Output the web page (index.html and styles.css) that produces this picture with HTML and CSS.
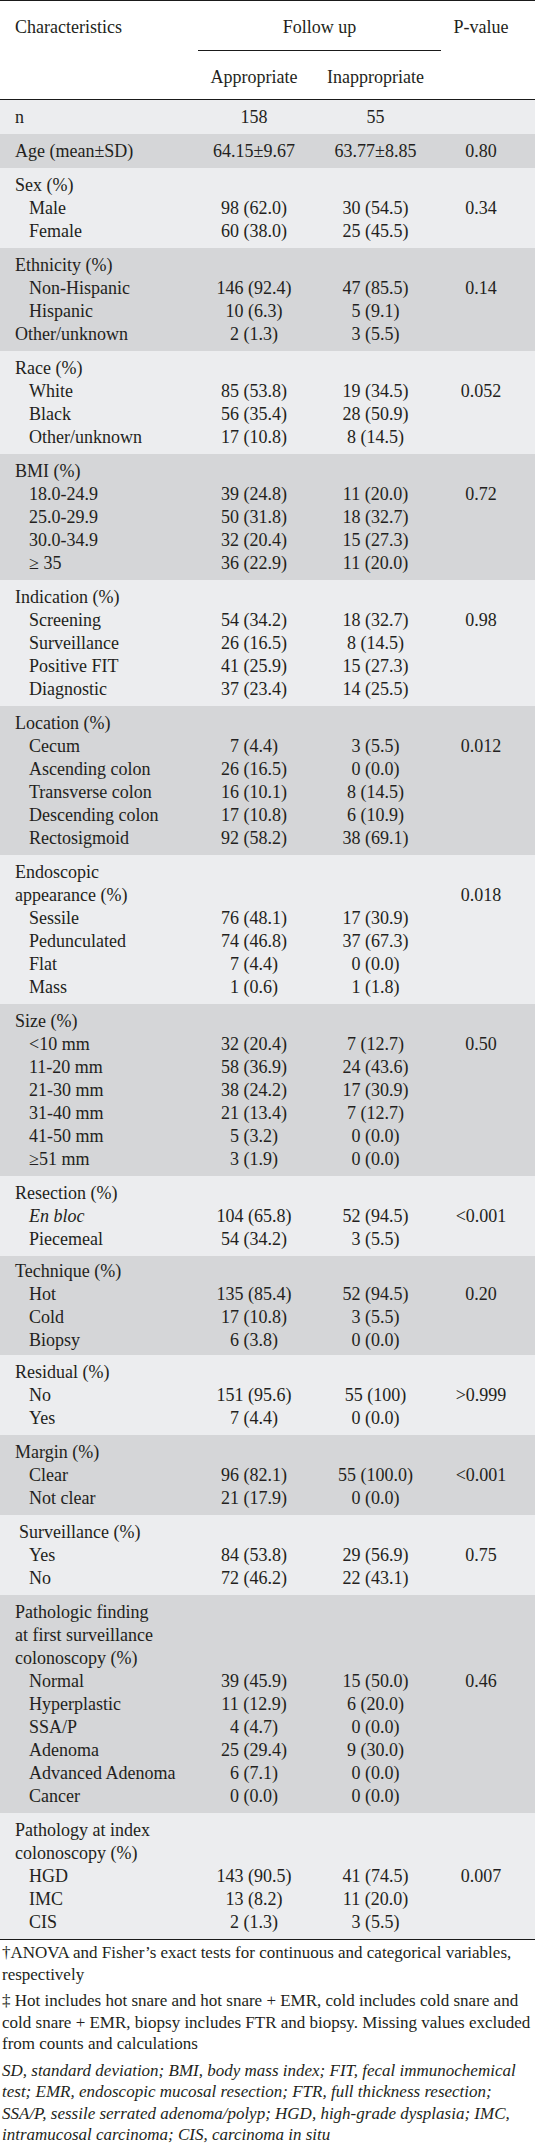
FILE: index.html
```html
<!DOCTYPE html>
<html lang="en">
  <head>
    <meta charset="utf-8">
    <title>Follow up characteristics</title>
    <link rel="stylesheet" href="styles.css">
  </head>
  <body>
    <table class="stats">
      <colgroup>
        <col class="c-lbl">
        <col class="c-app">
        <col class="c-inapp">
        <col class="c-p">
      </colgroup>
      <thead>
        <tr class="head-top">
          <th class="lbl" rowspan="2">Characteristics</th>
          <th class="follow" colspan="2">Follow up</th>
          <th class="pval" rowspan="2">P-value</th>
        </tr>
        <tr class="head-sub">
          <th>Appropriate</th>
          <th>Inappropriate</th>
        </tr>
      </thead>
      <tbody>
        <tr><td class="lbl">n</td><td>158</td><td>55</td><td class="pval"></td></tr>
      </tbody>
      <tbody>
        <tr><td class="lbl">Age (mean±SD)</td><td>64.15±9.67</td><td>63.77±8.85</td><td class="pval">0.80</td></tr>
      </tbody>
      <tbody>
        <tr><td class="lbl">Sex (%)</td><td></td><td></td><td class="pval"></td></tr>
        <tr><td class="sub">Male</td><td>98 (62.0)</td><td>30 (54.5)</td><td class="pval">0.34</td></tr>
        <tr><td class="sub">Female</td><td>60 (38.0)</td><td>25 (45.5)</td><td class="pval"></td></tr>
      </tbody>
      <tbody>
        <tr><td class="lbl">Ethnicity (%)</td><td></td><td></td><td class="pval"></td></tr>
        <tr><td class="sub">Non-Hispanic</td><td>146 (92.4)</td><td>47 (85.5)</td><td class="pval">0.14</td></tr>
        <tr><td class="sub">Hispanic</td><td>10 (6.3)</td><td>5 (9.1)</td><td class="pval"></td></tr>
        <tr><td class="lbl">Other/unknown</td><td>2 (1.3)</td><td>3 (5.5)</td><td class="pval"></td></tr>
      </tbody>
      <tbody>
        <tr><td class="lbl">Race (%)</td><td></td><td></td><td class="pval"></td></tr>
        <tr><td class="sub">White</td><td>85 (53.8)</td><td>19 (34.5)</td><td class="pval">0.052</td></tr>
        <tr><td class="sub">Black</td><td>56 (35.4)</td><td>28 (50.9)</td><td class="pval"></td></tr>
        <tr><td class="sub">Other/unknown</td><td>17 (10.8)</td><td>8 (14.5)</td><td class="pval"></td></tr>
      </tbody>
      <tbody>
        <tr><td class="lbl">BMI (%)</td><td></td><td></td><td class="pval"></td></tr>
        <tr><td class="sub">18.0-24.9</td><td>39 (24.8)</td><td>11 (20.0)</td><td class="pval">0.72</td></tr>
        <tr><td class="sub">25.0-29.9</td><td>50 (31.8)</td><td>18 (32.7)</td><td class="pval"></td></tr>
        <tr><td class="sub">30.0-34.9</td><td>32 (20.4)</td><td>15 (27.3)</td><td class="pval"></td></tr>
        <tr><td class="sub">≥ 35</td><td>36 (22.9)</td><td>11 (20.0)</td><td class="pval"></td></tr>
      </tbody>
      <tbody>
        <tr><td class="lbl">Indication (%)</td><td></td><td></td><td class="pval"></td></tr>
        <tr><td class="sub">Screening</td><td>54 (34.2)</td><td>18 (32.7)</td><td class="pval">0.98</td></tr>
        <tr><td class="sub">Surveillance</td><td>26 (16.5)</td><td>8 (14.5)</td><td class="pval"></td></tr>
        <tr><td class="sub">Positive FIT</td><td>41 (25.9)</td><td>15 (27.3)</td><td class="pval"></td></tr>
        <tr><td class="sub">Diagnostic</td><td>37 (23.4)</td><td>14 (25.5)</td><td class="pval"></td></tr>
      </tbody>
      <tbody>
        <tr><td class="lbl">Location (%)</td><td></td><td></td><td class="pval"></td></tr>
        <tr><td class="sub">Cecum</td><td>7 (4.4)</td><td>3 (5.5)</td><td class="pval">0.012</td></tr>
        <tr><td class="sub">Ascending colon</td><td>26 (16.5)</td><td>0 (0.0)</td><td class="pval"></td></tr>
        <tr><td class="sub">Transverse colon</td><td>16 (10.1)</td><td>8 (14.5)</td><td class="pval"></td></tr>
        <tr><td class="sub">Descending colon</td><td>17 (10.8)</td><td>6 (10.9)</td><td class="pval"></td></tr>
        <tr><td class="sub">Rectosigmoid</td><td>92 (58.2)</td><td>38 (69.1)</td><td class="pval"></td></tr>
      </tbody>
      <tbody>
        <tr><td class="lbl">Endoscopic</td><td></td><td></td><td class="pval"></td></tr>
        <tr><td class="lbl">appearance (%)</td><td></td><td></td><td class="pval">0.018</td></tr>
        <tr><td class="sub">Sessile</td><td>76 (48.1)</td><td>17 (30.9)</td><td class="pval"></td></tr>
        <tr><td class="sub">Pedunculated</td><td>74 (46.8)</td><td>37 (67.3)</td><td class="pval"></td></tr>
        <tr><td class="sub">Flat</td><td>7 (4.4)</td><td>0 (0.0)</td><td class="pval"></td></tr>
        <tr><td class="sub">Mass</td><td>1 (0.6)</td><td>1 (1.8)</td><td class="pval"></td></tr>
      </tbody>
      <tbody>
        <tr><td class="lbl">Size (%)</td><td></td><td></td><td class="pval"></td></tr>
        <tr><td class="sub">&lt;10 mm</td><td>32 (20.4)</td><td>7 (12.7)</td><td class="pval">0.50</td></tr>
        <tr><td class="sub">11-20 mm</td><td>58 (36.9)</td><td>24 (43.6)</td><td class="pval"></td></tr>
        <tr><td class="sub">21-30 mm</td><td>38 (24.2)</td><td>17 (30.9)</td><td class="pval"></td></tr>
        <tr><td class="sub">31-40 mm</td><td>21 (13.4)</td><td>7 (12.7)</td><td class="pval"></td></tr>
        <tr><td class="sub">41-50 mm</td><td>5 (3.2)</td><td>0 (0.0)</td><td class="pval"></td></tr>
        <tr><td class="sub">≥51 mm</td><td>3 (1.9)</td><td>0 (0.0)</td><td class="pval"></td></tr>
      </tbody>
      <tbody>
        <tr><td class="lbl">Resection (%)</td><td></td><td></td><td class="pval"></td></tr>
        <tr><td class="sub"><em>En bloc</em></td><td>104 (65.8)</td><td>52 (94.5)</td><td class="pval">&lt;0.001</td></tr>
        <tr><td class="sub">Piecemeal</td><td>54 (34.2)</td><td>3 (5.5)</td><td class="pval"></td></tr>
      </tbody>
      <tbody class="tight">
        <tr><td class="lbl">Technique (%)</td><td></td><td></td><td class="pval"></td></tr>
        <tr><td class="sub">Hot</td><td>135 (85.4)</td><td>52 (94.5)</td><td class="pval">0.20</td></tr>
        <tr><td class="sub">Cold</td><td>17 (10.8)</td><td>3 (5.5)</td><td class="pval"></td></tr>
        <tr><td class="sub">Biopsy</td><td>6 (3.8)</td><td>0 (0.0)</td><td class="pval"></td></tr>
      </tbody>
      <tbody>
        <tr><td class="lbl">Residual (%)</td><td></td><td></td><td class="pval"></td></tr>
        <tr><td class="sub">No</td><td>151 (95.6)</td><td>55 (100)</td><td class="pval">&gt;0.999</td></tr>
        <tr><td class="sub">Yes</td><td>7 (4.4)</td><td>0 (0.0)</td><td class="pval"></td></tr>
      </tbody>
      <tbody>
        <tr><td class="lbl">Margin (%)</td><td></td><td></td><td class="pval"></td></tr>
        <tr><td class="sub">Clear</td><td>96 (82.1)</td><td>55 (100.0)</td><td class="pval">&lt;0.001</td></tr>
        <tr><td class="sub">Not clear</td><td>21 (17.9)</td><td>0 (0.0)</td><td class="pval"></td></tr>
      </tbody>
      <tbody>
        <tr><td class="lbl shifted">Surveillance (%)</td><td></td><td></td><td class="pval"></td></tr>
        <tr><td class="sub">Yes</td><td>84 (53.8)</td><td>29 (56.9)</td><td class="pval">0.75</td></tr>
        <tr><td class="sub">No</td><td>72 (46.2)</td><td>22 (43.1)</td><td class="pval"></td></tr>
      </tbody>
      <tbody>
        <tr><td class="lbl">Pathologic finding</td><td></td><td></td><td class="pval"></td></tr>
        <tr><td class="lbl">at first surveillance</td><td></td><td></td><td class="pval"></td></tr>
        <tr><td class="lbl">colonoscopy (%)</td><td></td><td></td><td class="pval"></td></tr>
        <tr><td class="sub">Normal</td><td>39 (45.9)</td><td>15 (50.0)</td><td class="pval">0.46</td></tr>
        <tr><td class="sub">Hyperplastic</td><td>11 (12.9)</td><td>6 (20.0)</td><td class="pval"></td></tr>
        <tr><td class="sub">SSA/P</td><td>4 (4.7)</td><td>0 (0.0)</td><td class="pval"></td></tr>
        <tr><td class="sub">Adenoma</td><td>25 (29.4)</td><td>9 (30.0)</td><td class="pval"></td></tr>
        <tr><td class="sub">Advanced Adenoma</td><td>6 (7.1)</td><td>0 (0.0)</td><td class="pval"></td></tr>
        <tr><td class="sub">Cancer</td><td>0 (0.0)</td><td>0 (0.0)</td><td class="pval"></td></tr>
      </tbody>
      <tbody>
        <tr><td class="lbl">Pathology at index</td><td></td><td></td><td class="pval"></td></tr>
        <tr><td class="lbl">colonoscopy (%)</td><td></td><td></td><td class="pval"></td></tr>
        <tr><td class="sub">HGD</td><td>143 (90.5)</td><td>41 (74.5)</td><td class="pval">0.007</td></tr>
        <tr><td class="sub">IMC</td><td>13 (8.2)</td><td>11 (20.0)</td><td class="pval"></td></tr>
        <tr><td class="sub">CIS</td><td>2 (1.3)</td><td>3 (5.5)</td><td class="pval"></td></tr>
      </tbody>
    </table>

    <div class="notes">
      <p>†ANOVA and Fisher’s exact tests for continuous and categorical variables, respectively</p>
      <p>‡ Hot includes hot snare and hot snare + EMR, cold includes cold snare and cold snare + EMR, biopsy includes FTR and biopsy. Missing values excluded from counts and calculations</p>
      <p class="abbr">SD, standard deviation; BMI, body mass index; FIT, fecal immunochemical test; EMR, endoscopic mucosal resection; FTR, full thickness resection; SSA/P, sessile serrated adenoma/polyp; HGD, high-grade dysplasia; IMC, intramucosal carcinoma; CIS, carcinoma in situ</p>
    </div>
  </body>
</html>
```

FILE: styles.css
```css
html, body {
  margin: 0;
  padding: 0;
  background-color: white;
}

body {
  width: 535px;
  font-family: "Liberation Serif", "Times New Roman", serif;
  font-size: 18px;
  color: #231f20;
}

.stats {
  width: 535px;
  table-layout: fixed;
  border-collapse: collapse;
  border-spacing: 0;
  border-top: 1px solid #1a1a1a;
  border-bottom: 1px solid #1a1a1a;
}

.c-lbl { width: 198px; }
.c-app { width: 112px; }
.c-inapp { width: 131px; }
.c-p { width: 94px; }

.stats th,
.stats td {
  padding: 0;
  line-height: 23px;
  font-weight: normal;
  text-align: center;
  white-space: nowrap;
}

/* header */
.stats thead {
  background-color: white;
  border-bottom: 1px solid #1a1a1a;
}

.head-top th {
  height: 50px;
  padding-top: 15px;
  vertical-align: top;
  box-sizing: border-box;
}

.head-top .follow {
  border-bottom: 1px solid #1a1a1a;
}

.head-sub th {
  height: 49px;
  padding-top: 15px;
  vertical-align: top;
  box-sizing: border-box;
}

.stats .lbl {
  text-align: left;
  padding-left: 15px;
}

.stats .sub {
  text-align: left;
  padding-left: 29px;
}

.stats .shifted {
  padding-left: 19px;
}

.stats .pval {
  padding-right: 14px;
}

/* alternating section shading */
.stats tbody:nth-of-type(odd) {
  background-color: #ecedef;
}

.stats tbody:nth-of-type(even) {
  background-color: #d5d6d8;
}

.stats tbody tr:first-child td {
  padding-top: 6px;
}

.stats tbody tr:last-child td {
  padding-bottom: 5px;
}

.stats tbody.tight tr:first-child td {
  padding-top: 4px;
}

.stats tbody.tight tr:last-child td {
  padding-bottom: 3px;
}

.stats td em {
  font-style: italic;
}

/* footnotes */
.notes {
  padding: 2px 0 0 2px;
  font-size: 17px;
  line-height: 21.5px;
}

.notes p {
  margin: 0 0 5px;
}

.notes .abbr {
  font-style: italic;
}
```
